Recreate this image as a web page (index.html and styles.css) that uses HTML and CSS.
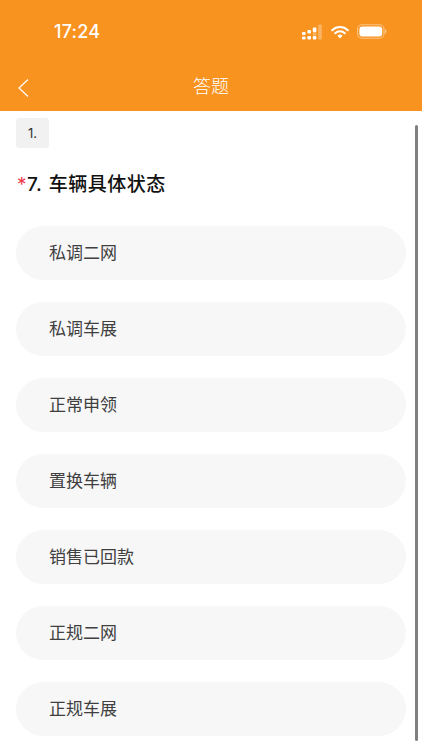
FILE: index.html
```html
<!DOCTYPE html>
<html lang="zh">
<head>
<meta charset="utf-8">
<title>答题</title>
<link rel="stylesheet" href="styles.css">
</head>
<body>
<div class="app">
  <header class="header">
    <div class="status">
      <span class="time">17:24</span>
      <div class="status-icons">
        <svg class="signal" width="21" height="16" viewBox="0 0 21 16">
          <g fill="#fff">
            <rect x="0" y="8" width="3.6" height="3" rx="1"/>
            <rect x="0" y="12.6" width="3.6" height="3" rx="1"/>
            <rect x="5.4" y="6" width="3.6" height="3.4" rx="1"/>
            <rect x="5.4" y="12" width="3.6" height="3.6" rx="1"/>
            <rect x="10.8" y="3.6" width="3.6" height="4.6" rx="1"/>
            <rect x="10.8" y="12" width="3.6" height="3.6" rx="1"/>
          </g>
          <g fill="#fff" opacity=".3">
            <rect x="10.8" y="8.4" width="3.6" height="3.4" rx="1"/>
            <rect x="16.2" y="0.4" width="3.6" height="15.2" rx="1.2"/>
          </g>
        </svg>
        <svg class="wifi" width="18" height="14" viewBox="0 0 18 14">
          <path d="M1.2 5.2a11.2 11.2 0 0 1 15.6 0" fill="none" stroke="#fff" stroke-width="2.1" stroke-linecap="round"/>
          <path d="M4.2 8.2a7 7 0 0 1 9.6 0" fill="none" stroke="#fff" stroke-width="2.1" stroke-linecap="round"/>
          <path d="M6.4 10.8a3.8 3.8 0 0 1 5.2 0L9 13.6z" fill="#fff"/>
        </svg>
        <svg class="battery" width="30" height="15" viewBox="0 0 30 15">
          <rect x="0.6" y="0.8" width="26.4" height="13.4" rx="4.4" fill="none" stroke="#fff" stroke-opacity=".45" stroke-width="1.1"/>
          <rect x="2.4" y="2.6" width="22.8" height="9.8" rx="3" fill="#fff"/>
          <rect x="28" y="5.6" width="1.3" height="3.8" rx=".6" fill="#fff" fill-opacity=".5"/>
        </svg>
      </div>
    </div>
    <div class="nav">
      <svg class="back" width="12" height="20" viewBox="0 0 12 20">
        <path d="M11 1.5 2 10l9 8.5" fill="none" stroke="#fff" stroke-width="1.2"/>
      </svg>
      <h1 class="nav-title">答题</h1>
    </div>
  </header>
  <main class="content">
    <span class="tag">1.</span>
    <h2 class="question"><span class="required">*</span>7. 车辆具体状态</h2>
    <ul class="options">
      <li class="option">私调二网</li>
      <li class="option">私调车展</li>
      <li class="option">正常申领</li>
      <li class="option">置换车辆</li>
      <li class="option">销售已回款</li>
      <li class="option">正规二网</li>
      <li class="option">正规车展</li>
    </ul>
  </main>
  <div class="scrollbar"></div>
</div>
</body>
</html>
```
FILE: styles.css
```css
* { box-sizing: border-box; }
html, body { margin: 0; padding: 0; background: #fff; }
body {
  font-family: "Inter", "Noto Sans CJK SC", sans-serif;
}
.app {
  position: relative;
  width: 422px;
  height: 750px;
  overflow: hidden;
  background: #fff;
}
.header {
  height: 111px;
  background: #f8931f;
  color: #fff;
}
.status {
  height: 63px;
  padding: 21px 35px 0 54px;
  display: flex;
  justify-content: space-between;
  align-items: flex-start;
}
.time {
  font-size: 18px;
  font-weight: 500;
  line-height: 21px;
  letter-spacing: .2px;
}
.status-icons {
  display: flex;
  align-items: center;
  gap: 8px;
  height: 21px;
}
.nav {
  position: relative;
  height: 48px;
  display: flex;
  align-items: center;
  justify-content: center;
}
.back {
  position: absolute;
  left: 17px;
  top: 15px;
}
.nav-title {
  margin: 0;
  font-size: 18px;
  font-weight: 300;
  line-height: 48px;
}
.content {
  padding: 7px 16px 0;
}
.tag {
  display: block;
  width: 33px;
  height: 30px;
  border-radius: 3px;
  background: #f1f1f1;
  color: #333;
  font-size: 13px;
  line-height: 30px;
  text-align: center;
}
.question {
  margin: 25px 0 0;
  font-size: 19px;
  font-weight: 500;
  line-height: 24px;
  color: #111;
  letter-spacing: .5px;
  word-spacing: 1px;
}
.required { color: #ee3a4a; font-weight: 400; margin-left: 1px; }
.options {
  list-style: none;
  margin: 29px 0 0;
  padding: 0;
  width: 390px;
  display: flex;
  flex-direction: column;
  gap: 22px;
}
.option {
  height: 54px;
  padding-left: 33px;
  border-radius: 27px;
  background: #f7f7f7;
  color: #404040;
  font-size: 17px;
  font-weight: 400;
  line-height: 54px;
}
.scrollbar {
  position: absolute;
  left: 415px;
  top: 125px;
  width: 3px;
  height: 616px;
  border-radius: 2px;
  background: #808080;
}
```
